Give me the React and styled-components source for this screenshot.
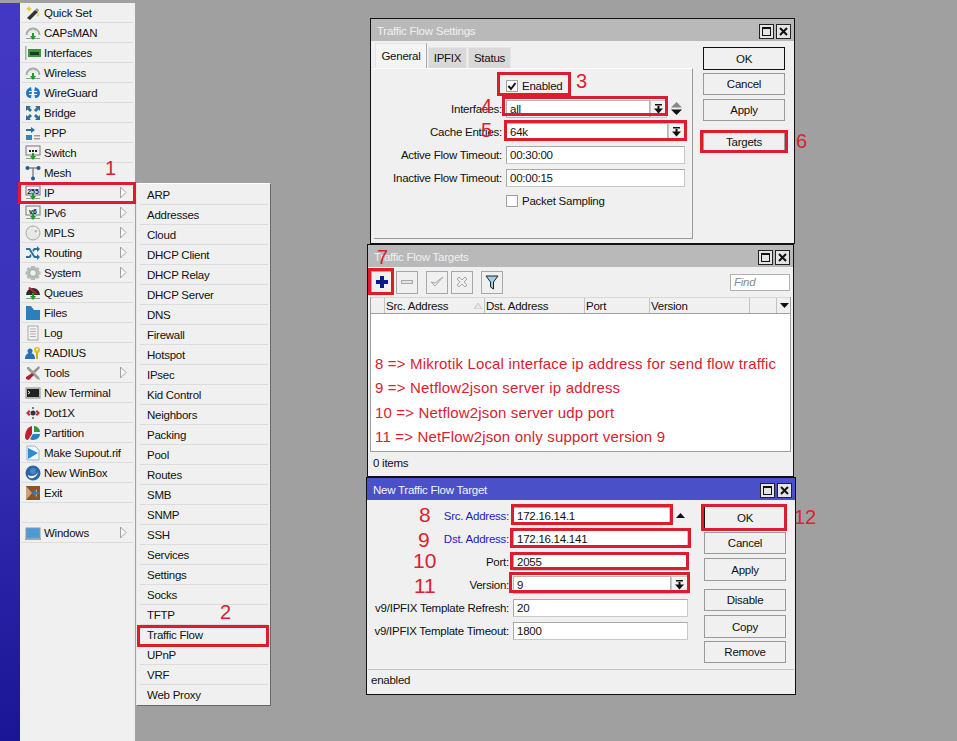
import React from "react";
import styled, { createGlobalStyle } from "styled-components";

const Global = createGlobalStyle`
  html, body { margin: 0; padding: 0; background: #a0a0a0; }
  * { box-sizing: border-box; }
`;

const Screen = styled.div`
  position: relative;
  width: 957px;
  height: 741px;
  overflow: hidden;
  display: flex;
  background: #a0a0a0;
  color: #111;
  font-family: "Liberation Sans", Arial, sans-serif;
  font-size: 11.5px;
  letter-spacing: -0.25px;
`;

const Strip = styled.div`
  width: 20px;
  margin-top: 3px;
  background: linear-gradient(180deg, #4238c4 0%, #3a32b8 50%, #1a1496 100%);
`;

const Sidebar = styled.nav`
  width: 115px;
  margin-top: 3px;
  background: #f0f0f0;
`;

const MenuRow = styled.div`
  height: 20px;
  margin: 0 2px;
  display: flex;
  align-items: center;
  border-bottom: 1px solid #dcdcdc;
  position: relative;
  svg.ico { margin-left: 3px; margin-right: 3px; flex: none; }
`;

const Chevron = styled.svg`
  position: absolute;
  right: 6px;
  top: 3px;
`;

const Desktop = styled.main`
  flex: 1;
  position: relative;
`;

const SubMenu = styled.div`
  position: absolute;
  left: 1px;
  top: 183px;
  width: 135px;
  height: 523px;
  background: #f0f0f0;
  padding: 1px 2px 0 3px;
  border-top: 1px solid #fff;
  border-left: 1px solid #e8e8e8;
  border-right: 1px solid #6a6a6a;
  border-bottom: 1px solid #6a6a6a;
`;

const SubRow = styled.div`
  height: 20px;
  padding-left: 7px;
  display: flex;
  align-items: center;
  border-bottom: 1px solid #dcdcdc;
  &:last-child { border-bottom: none; }
`;

const Win = styled.section`
  position: absolute;
  left: ${(p) => p.$x - 135}px;
  top: ${(p) => p.$y}px;
  width: ${(p) => p.$w}px;
  height: ${(p) => p.$h}px;
  border: 1px solid #111;
  background: #f0f0f0;
  display: flex;
  flex-direction: column;
`;

const TitleBar = styled.header`
  height: 22px;
  flex: none;
  display: flex;
  align-items: center;
  justify-content: space-between;
  padding: 2px 3px 0 6px;
  background: ${(p) => (p.$active ? "#4a50c8" : "#b9b9b9")};
  color: ${(p) => (p.$active ? "#f4f4ff" : "#f0f0f0")};
`;

const WinBtns = styled.div`
  display: flex;
  gap: 2px;
`;

const WinBtn = styled.div`
  width: 15px;
  height: 15px;
  border: 1px solid #222;
  background: #e4e4e4;
  display: flex;
  align-items: center;
  justify-content: center;
`;

const MaxGlyph = styled.div`
  width: 9px;
  height: 9px;
  border: 1px solid #111;
  border-top-width: 2px;
`;

const SettingsBody = styled.div`
  flex: 1;
  display: flex;
  padding: 2px 9px 4px 3px;
  gap: 10px;
`;

const TabArea = styled.div`
  width: 319px;
  display: flex;
  flex-direction: column;
`;

const Tabs = styled.div`
  display: flex;
  align-items: flex-end;
  height: 25px;
  padding-left: 1px;
  gap: 1px;
`;

const Tab = styled.div`
  height: ${(p) => (p.$on ? 25 : 21)}px;
  width: ${(p) => p.$w}px;
  display: flex;
  align-items: center;
  justify-content: center;
  background: ${(p) => (p.$on ? "#f4f4f4" : "#d9d9d9")};
  border: 1px solid #e6e6e6;
  border-bottom: none;
  border-right-color: ${(p) => (p.$on ? "#a8a8a8" : "#e6e6e6")};
`;

const TabPanel = styled.div`
  flex: 1;
  border-top: 1px solid #fff;
  border-right: 1px solid #9a9a9a;
  border-bottom: 1px solid #9a9a9a;
  padding-top: 5px;
`;

const FormRow = styled.div`
  height: 23px;
  display: flex;
  align-items: center;
  gap: 4px;
`;

const Label = styled.label`
  width: ${(p) => p.$w}px;
  flex: none;
  text-align: right;
  white-space: nowrap;
  color: ${(p) => (p.$link ? "#1c1cc0" : "inherit")};
`;

const Field = styled.div`
  width: ${(p) => p.$w}px;
  height: 18px;
  flex: none;
  display: flex;
  align-items: center;
  padding-left: 3px;
  background: #fff;
  border: 1px solid #a9a9a9;
  border-right-color: #c8c8c8;
  border-bottom-color: #c8c8c8;
`;

const Combo = styled.div`
  width: ${(p) => p.$w}px;
  height: 18px;
  flex: none;
  display: flex;
`;

const ComboText = styled.div`
  flex: 1;
  padding-left: 3px;
  display: flex;
  align-items: center;
  background: #fff;
  border: 1px solid #b4b4b4;
`;

const ComboBtn = styled.div`
  width: 17px;
  flex: none;
  display: flex;
  align-items: center;
  justify-content: center;
  background: #f2f2f2;
  border: 1px solid #c8c8c8;
`;

const CheckBox = styled.div`
  width: 12px;
  height: 12px;
  flex: none;
  background: #fff;
  border: 1px solid #a0a0a0;
  display: flex;
  align-items: center;
  justify-content: center;
`;

const CheckRow = styled(FormRow)`
  padding-left: 132px;
`;

const UpArrow = styled.svg`
  margin-left: 2px;
`;

const BtnCol = styled.div`
  flex: 1;
  display: flex;
  flex-direction: column;
  padding-top: ${(p) => p.$top || 4}px;
`;

const Btn = styled.div`
  height: ${(p) => p.$h || 22}px;
  margin-bottom: ${(p) => p.$after ?? 4}px;
  display: flex;
  align-items: center;
  justify-content: center;
  background: #f0f0f0;
  border: 1px solid ${(p) => (p.$primary ? "#111" : "#9a9a9a")};
`;

const Toolbar = styled.div`
  height: 30px;
  flex: none;
  display: flex;
  align-items: center;
  padding: 0 3px 0 2px;
`;

const ToolBtn = styled.div`
  width: 22px;
  height: 23px;
  margin-left: ${(p) => p.$ml ?? 3}px;
  display: flex;
  align-items: center;
  justify-content: center;
  background: #f0f0f0;
  border: 1px solid #a8a8a8;
`;

const FindBox = styled.div`
  width: 60px;
  height: 17px;
  margin-left: auto;
  padding-left: 3px;
  background: #fff;
  border: 1px solid #b0b0b0;
  color: #8a8a8a;
  font-style: italic;
  display: flex;
  align-items: center;
`;

const TableWrap = styled.div`
  margin: 0 2px;
  flex: 1;
  display: flex;
  flex-direction: column;
  border: 1px solid #a0a0a0;
  border-top: none;
`;

const TableHead = styled.div`
  height: 17px;
  flex: none;
  display: flex;
  background: #f0f0f0;
  border-bottom: 1px solid #a0a0a0;
  border-top: 1px solid #d8d8d8;
`;

const HeadCell = styled.div`
  width: ${(p) => p.$w}px;
  flex: none;
  padding-left: 1px;
  display: flex;
  align-items: center;
  justify-content: ${(p) => (p.$between ? "space-between" : "flex-start")};
  border-right: 1px solid #c4c4c4;
  svg { margin-right: 2px; }
`;

const HeadArrow = styled.svg`
  margin: 5px 0 0 3px;
`;

const TableBody = styled.div`
  flex: 1;
  background: #fff;
  padding: 38px 0 0 4px;
  color: #d8232f;
  font-size: 15px;
  letter-spacing: 0.17px;
`;

const NoteLine = styled.div`
  height: 24.4px;
  line-height: 24.4px;
  white-space: nowrap;
`;

const StatusBar = styled.div`
  height: ${(p) => p.$h}px;
  flex: none;
  margin: ${(p) => p.$m};
  padding-left: 3px;
  display: flex;
  align-items: center;
  border-top: 1px solid ${(p) => p.$line || "transparent"};
`;

const TargetBody = styled.div`
  flex: 1;
  display: flex;
  padding: 4px 9px 0 0;
  gap: 16px;
`;

const FormCol = styled.div`
  width: 321px;
`;

const Mark = styled.div`
  position: absolute;
  left: ${(p) => p.$x}px;
  top: ${(p) => p.$y}px;
  width: ${(p) => p.$w}px;
  height: ${(p) => p.$h}px;
  border: 3px solid #dd1c2c;
  pointer-events: none;
`;

const Num = styled.span`
  position: absolute;
  left: ${(p) => p.$x}px;
  top: ${(p) => p.$y}px;
  font-size: ${(p) => p.$s || 20}px;
  line-height: 1;
  letter-spacing: 0;
  color: #d8232f;
`;

const Base = () => (
  <>
    <rect x="1" y="13" width="14" height="1" fill="#8aa58a" />
    <path d="M5 11h6l-3 4z" fill="#1f9a2b" />
    <rect x="7" y="8" width="2" height="4" fill="#1f9a2b" />
  </>
);

const Dome = () => (
  <>
    <path d="M1.500 10a6.500 6.500 0 0 1 13 0" fill="none" stroke="#a4aaa4" strokeWidth="2" />
    <path d="M5 8a3 3 0 0 1 6 0" fill="none" stroke="#d4d8d4" strokeWidth="1" />
    <Base />
  </>
);

const Monitor = ({ children }) => (
  <>
    <rect x="1" y="1" width="14" height="9" fill="#f2f2f2" stroke="#777" />
    {children}
    <Base />
  </>
);

const icons = {
  quick: (
    <>
      <path d="M2 13L10 5l3 2-8 8z" fill="#333" />
      <path d="M10 5l3 2 1-2-2-2z" fill="#999" />
      <path d="M4 1l1 2 2 1-2 1-1 2-1-2-2-1 2-1zM13 8l.6 1.400L15 10l-1.400.6L13 12l-.6-1.400L11 10l1.400-.6z" fill="#e6c81e" />
    </>
  ),
  wireless: <Dome />,
  interfaces: (
    <>
      <rect x="0" y="1" width="1.500" height="14" fill="#a3b5a3" />
      <rect x="3" y="4" width="13" height="8" fill="#35993a" />
      <rect x="5" y="7" width="9" height="3" fill="#163f18" />
    </>
  ),
  wireguard: (
    <>
      <path d="M1 8c0-3 2-5 5-6L7 7 6 13C3 13 1 11 1 8zM15 8c0-3-2-5-5-6L9 7l1 6c3 0 5-2 5-5z" fill="#1c79cf" />
      <path d="M4 6h8v1H4zM4 9h8v1H4z" fill="#fff" />
    </>
  ),
  bridge: (
    <path d="M1 1h5L4.500 2.500 7 5 5 7 2.500 4.500 1 6zM15 1v5l-1.500-1.500L11 7 9 5l2.500-2.500L10 1zM1 15v-5l1.500 1.500L5 9l2 2-2.500 2.500L6 15zM15 15h-5l1.500-1.500L9 11l2-2 2.500 2.500L15 10z" fill="#2a6f9e" />
  ),
  ppp: (
    <>
      <path d="M1 4h5V2l4 3-4 3V6H1z" fill="#2a6f9e" />
      <rect x="1" y="10" width="6" height="5" fill="#2f86c4" />
      <path d="M9 10h6v1.500H9zM9 13h6v1.500H9z" fill="#9a9a9a" />
    </>
  ),
  sw: (
    <Monitor>
      <path d="M4 5h2v2H4zM7 5h2v2H7zM10 5h2v2h-2z" fill="#222" />
    </Monitor>
  ),
  mesh: (
    <>
      <path d="M3 3h10M8 3v10" stroke="#888" strokeWidth="1.500" />
      <circle cx="2.500" cy="3" r="2" fill="#1d5f93" />
      <circle cx="13.500" cy="3" r="2" fill="#1d5f93" />
      <circle cx="8" cy="13.500" r="2" fill="#1d5f93" />
    </>
  ),
  ip: (
    <Monitor>
      <text x="8" y="8.500" textAnchor="middle" fontSize="7" fontWeight="700" fontFamily="Liberation Sans" letterSpacing="0" fill="#111">255</text>
    </Monitor>
  ),
  ipv6: (
    <Monitor>
      <text x="8" y="8.500" textAnchor="middle" fontSize="7" fontWeight="700" fontFamily="Liberation Sans" letterSpacing="0" fill="#111">v6</text>
    </Monitor>
  ),
  mpls: (
    <>
      <circle cx="8" cy="8" r="7" fill="#e6e9e6" stroke="#a5aaa5" />
      <path d="M9 2a6 6 0 0 1 4 7c-2-1-3-4-4-7z" fill="#fff" />
      <circle cx="11" cy="6" r="1.500" fill="#b8bdb8" />
    </>
  ),
  routing: (
    <path d="M1 3h4l5 8h2V9l3 3-3 3v-2H9L4 5H1zM1 11h3l1.500-2 1.200 2L5 13H1zM9 3h3V1l3 3-3 3V5h-2L8.500 7 7.300 5z" fill="#2a6f9e" />
  ),
  system: (
    <>
      <path d="M6 1h4l.5 2 2-1 2 2-1 2 2 .5v3l-2 .5 1 2-2 2-2-1-.5 2H6l-.5-2-2 1-2-2 1-2-2-.5v-3l2-.5-1-2 2-2 2 1z" fill="#b6bcb6" />
      <circle cx="8" cy="8" r="3.500" fill="#eee" stroke="#9ca29c" />
    </>
  ),
  queues: (
    <>
      <path d="M1 10a7 7 0 0 1 14 0z" fill="#2b2b2b" />
      <path d="M3 3l2-1 8 7h-3z" fill="#c01f2c" />
      <Base />
    </>
  ),
  files: <path d="M1 1h5l3 4h6v10H1z" fill="#2a7fbd" />,
  log: (
    <>
      <rect x="3" y="1" width="10" height="14" fill="#f2f2f2" stroke="#a8a8a8" />
      <path d="M5 4h6M5 6.500h6M5 9h6M5 11.500h6" stroke="#b0b0b0" />
    </>
  ),
  radius: (
    <>
      <circle cx="5" cy="6" r="2.500" fill="#2a6fb8" />
      <path d="M0 14c0-4 2-6 5-6s5 2 5 6z" fill="#2a6fb8" />
      <circle cx="12" cy="5" r="3" fill="#e4c020" />
      <circle cx="12" cy="4.500" r="1" fill="#fff" />
      <rect x="11" y="7" width="2" height="7" fill="#d4b010" />
    </>
  ),
  tools: (
    <>
      <path d="M2 2l2 0 10 10 1 3-3-1L2 4z" fill="#9a9e9a" />
      <path d="M14 1l1 2-5 5-2-2z" fill="#8f9390" />
      <path d="M7 8l2 2-5 5-3-1 0-2z" fill="#b3202c" />
    </>
  ),
  terminal: (
    <>
      <rect x="1" y="3" width="14" height="10" fill="#d9d9d9" stroke="#8a8a8a" />
      <rect x="2" y="4" width="12" height="8" fill="#222" />
      <path d="M3 6l2 1.500L3 9" stroke="#eee" fill="none" />
    </>
  ),
  dot1x: (
    <>
      <path d="M1 8l3-3 1.500 1.500L4 8l1.500 1.500L4 11zM15 8l-3-3-1.500 1.500L12 8l-1.500 1.500L12 11z" fill="#b53040" />
      <circle cx="8" cy="8" r="2.500" fill="#3a3038" />
      <path d="M8 2v2M8 12v2" stroke="#555" strokeWidth="1.500" />
    </>
  ),
  partition: (
    <>
      <path d="M7 1C3 2 0 6 0 12c0 2 1 3 3 3l4-6z" fill="#c0202c" />
      <path d="M9 1c3 0 6 3 6 6H9z" fill="#2a9a3a" />
      <path d="M8 9h7c0 3-3 6-7 6-1.500 0-2.500-.5-3-1z" fill="#2a7fc0" />
    </>
  ),
  supout: (
    <>
      <path d="M2 1h8l4 4v10H2z" fill="#f4f8fc" stroke="#9fb4c8" />
      <path d="M3 3l10 5-10 6z" fill="#2f8ad0" />
    </>
  ),
  winbox: (
    <>
      <circle cx="8" cy="8" r="7.500" fill="#2d66a8" />
      <path d="M3 10c3 2 8 1 10-3-1 5-5 7-8 6-1-.5-2-1.500-2-3z" fill="#eef4fb" />
      <circle cx="8" cy="6" r="3" fill="#4c86c4" />
    </>
  ),
  exit: (
    <>
      <rect x="1" y="1" width="14" height="14" fill="#8c5426" />
      <path d="M1 1l6 7-6 7zM8 8l4-4v3h3v2h-3v3z" fill="#cfa070" />
      <path d="M7 8l4-4v3h4v2h-4v3z" fill="#2a7fc0" />
    </>
  ),
  windows: (
    <>
      <rect x="1" y="3" width="14" height="10" fill="#4a9ad8" stroke="#8a9aa8" />
      <rect x="0" y="13" width="16" height="2" fill="#9aa4ac" />
    </>
  ),
};

const sideItems = [
  ["Quick Set", "quick"],
  ["CAPsMAN", "wireless"],
  ["Interfaces", "interfaces"],
  ["Wireless", "wireless"],
  ["WireGuard", "wireguard"],
  ["Bridge", "bridge"],
  ["PPP", "ppp"],
  ["Switch", "sw"],
  ["Mesh", "mesh"],
  ["IP", "ip", true],
  ["IPv6", "ipv6", true],
  ["MPLS", "mpls", true],
  ["Routing", "routing", true],
  ["System", "system", true],
  ["Queues", "queues"],
  ["Files", "files"],
  ["Log", "log"],
  ["RADIUS", "radius"],
  ["Tools", "tools", true],
  ["New Terminal", "terminal"],
  ["Dot1X", "dot1x"],
  ["Partition", "partition"],
  ["Make Supout.rif", "supout"],
  ["New WinBox", "winbox"],
  ["Exit", "exit"],
  [""],
  ["Windows", "windows", true],
];

const subItems = [
  "ARP", "Addresses", "Cloud", "DHCP Client", "DHCP Relay", "DHCP Server", "DNS",
  "Firewall", "Hotspot", "IPsec", "Kid Control", "Neighbors", "Packing", "Pool",
  "Routes", "SMB", "SNMP", "SSH", "Services", "Settings", "Socks", "TFTP",
  "Traffic Flow", "UPnP", "VRF", "Web Proxy",
];

const marks = [
  [18, 182, 118, 22], [137, 625, 132, 22], [497, 72, 74, 24], [502, 96, 166, 20],
  [504, 120, 183, 21], [700, 130, 88, 23], [368, 268, 26, 27], [511, 504, 162, 21],
  [510, 528, 181, 20], [510, 552, 179, 18], [509, 572, 181, 21], [701, 504, 86, 27],
];

const nums = [
  ["1", 105, 158], ["2", 220, 602], ["3", 576, 71], ["4", 481, 96], ["5", 481, 120],
  ["6", 796, 131], ["7", 377, 247], ["8", 419, 504, 21], ["9", 418, 529, 21],
  ["10", 413, 550, 21], ["11", 414, 575, 21], ["12", 794, 507, 20],
];

const DropIcon = () => (
  <svg width="9" height="10" viewBox="0 0 9 10">
    <rect x="1" y="0" width="7" height="1.500" fill="#111" />
    <rect x="3.500" y="2" width="2" height="3" fill="#111" />
    <path d="M0 4.500h9L4.500 9.500z" fill="#111" />
  </svg>
);

const Controls = () => (
  <WinBtns>
    <WinBtn><MaxGlyph /></WinBtn>
    <WinBtn>
      <svg width="9" height="9" viewBox="0 0 9 9">
        <path d="M1 1l7 7M8 1L1 8" stroke="#111" strokeWidth="2" />
      </svg>
    </WinBtn>
  </WinBtns>
);

const SettingsWindow = () => (
  <Win $x={370} $y={18} $w={425} $h={226}>
    <TitleBar>
      <span>Traffic Flow Settings</span>
      <Controls />
    </TitleBar>
    <SettingsBody>
      <TabArea>
        <Tabs>
          <Tab $on $w={52}>General</Tab>
          <Tab $w={39}>IPFIX</Tab>
          <Tab $w={43}>Status</Tab>
        </Tabs>
        <TabPanel>
          <CheckRow>
            <CheckBox>
              <svg width="10" height="10" viewBox="0 0 10 10">
                <path d="M1.500 5l2.500 3 4.500-6" fill="none" stroke="#111" strokeWidth="2" />
              </svg>
            </CheckBox>
            Enabled
          </CheckRow>
          <FormRow>
            <Label $w={128}>Interfaces:</Label>
            <Combo $w={161}>
              <ComboText>all</ComboText>
              <ComboBtn><DropIcon /></ComboBtn>
            </Combo>
            <svg width="11" height="13" viewBox="0 0 11 13">
              <path d="M5.500 0L11 5.500H0z" fill="#888" />
              <path d="M5.500 13L11 7.500H0z" fill="#111" />
            </svg>
          </FormRow>
          <FormRow>
            <Label $w={128}>Cache Entries:</Label>
            <Combo $w={179}>
              <ComboText>64k</ComboText>
              <ComboBtn><DropIcon /></ComboBtn>
            </Combo>
          </FormRow>
          <FormRow>
            <Label $w={128}>Active Flow Timeout:</Label>
            <Field $w={179}>00:30:00</Field>
          </FormRow>
          <FormRow>
            <Label $w={128}>Inactive Flow Timeout:</Label>
            <Field $w={179}>00:00:15</Field>
          </FormRow>
          <CheckRow>
            <CheckBox />
            Packet Sampling
          </CheckRow>
        </TabPanel>
      </TabArea>
      <BtnCol>
        <Btn $primary $h={23} $after={3}>OK</Btn>
        <Btn>Cancel</Btn>
        <Btn $after={10}>Apply</Btn>
        <Btn>Targets</Btn>
      </BtnCol>
    </SettingsBody>
  </Win>
);

const TargetsWindow = () => (
  <Win $x={367} $y={244} $w={427} $h={233}>
    <TitleBar>
      <span>Traffic Flow Targets</span>
      <Controls />
    </TitleBar>
    <Toolbar>
      <ToolBtn $ml={1}>
        <svg width="14" height="14" viewBox="0 0 14 14">
          <path d="M5 1h4v4h4v4H9v4H5V9H1V5h4z" fill="#0c1a8c" />
        </svg>
      </ToolBtn>
      <ToolBtn>
        <svg width="12" height="4" viewBox="0 0 12 4">
          <rect x="0.500" y="0.500" width="11" height="3" fill="#e4e4e4" stroke="#a8a8a8" />
        </svg>
      </ToolBtn>
      <ToolBtn $ml={8}>
        <svg width="14" height="12" viewBox="0 0 14 12">
          <path d="M1 6l4 4 8-9-8 6z" fill="#eee" stroke="#a8a8a8" />
        </svg>
      </ToolBtn>
      <ToolBtn>
        <svg width="12" height="12" viewBox="0 0 12 12">
          <path d="M1 3l2-2 3 3 3-3 2 2-3 3 3 3-2 2-3-3-3 3-2-2 3-3z" fill="#eee" stroke="#a8a8a8" />
        </svg>
      </ToolBtn>
      <ToolBtn $ml={8}>
        <svg width="14" height="15" viewBox="0 0 14 15">
          <path d="M1 1h12L8.500 7v7l-3-2V7z" fill="#9cd0e8" stroke="#222" />
        </svg>
      </ToolBtn>
      <FindBox>Find</FindBox>
    </Toolbar>
    <TableWrap>
      <TableHead>
        <HeadCell $w={14} />
        <HeadCell $w={100} $between>
          Src. Address
          <svg width="8" height="6" viewBox="0 0 8 6">
            <path d="M4 0l4 6H0z" fill="#e8e8e8" stroke="#c8c8c8" />
          </svg>
        </HeadCell>
        <HeadCell $w={100}>Dst. Address</HeadCell>
        <HeadCell $w={65}>Port</HeadCell>
        <HeadCell $w={100}>Version</HeadCell>
        <HeadCell $w={27} />
        <HeadArrow width="9" height="5" viewBox="0 0 9 5">
          <path d="M0 0h9L4.500 5z" fill="#111" />
        </HeadArrow>
      </TableHead>
      <TableBody>
        <NoteLine>8 =&gt; Mikrotik Local interface ip address for send flow traffic</NoteLine>
        <NoteLine>9 =&gt; Netflow2json server ip address</NoteLine>
        <NoteLine>10 =&gt; Netflow2json server udp port</NoteLine>
        <NoteLine>11 =&gt; NetFlow2json only support version 9</NoteLine>
      </TableBody>
    </TableWrap>
    <StatusBar $h={21} $m="0 2px 3px">0 items</StatusBar>
  </Win>
);

const NewTargetWindow = () => (
  <Win $x={366} $y={477} $w={430} $h={218}>
    <TitleBar $active>
      <span>New Traffic Flow Target</span>
      <Controls />
    </TitleBar>
    <TargetBody>
      <FormCol>
        <FormRow>
          <Label $w={142} $link>Src. Address:</Label>
          <Field $w={157}>172.16.14.1</Field>
          <UpArrow width="9" height="5" viewBox="0 0 9 5">
            <path d="M4.500 0L9 5H0z" fill="#111" />
          </UpArrow>
        </FormRow>
        <FormRow>
          <Label $w={142} $link>Dst. Address:</Label>
          <Field $w={175}>172.16.14.141</Field>
        </FormRow>
        <FormRow>
          <Label $w={142}>Port:</Label>
          <Field $w={175}>2055</Field>
        </FormRow>
        <FormRow>
          <Label $w={142}>Version:</Label>
          <Combo $w={175}>
            <ComboText>9</ComboText>
            <ComboBtn><DropIcon /></ComboBtn>
          </Combo>
        </FormRow>
        <FormRow>
          <Label $w={142}>v9/IPFIX Template Refresh:</Label>
          <Field $w={175}>20</Field>
        </FormRow>
        <FormRow>
          <Label $w={142}>v9/IPFIX Template Timeout:</Label>
          <Field $w={175}>1800</Field>
        </FormRow>
      </FormCol>
      <BtnCol $top={2}>
        <Btn $primary $h={23} $after={3}>OK</Btn>
        <Btn>Cancel</Btn>
        <Btn $h={23} $after={8}>Apply</Btn>
        <Btn>Disable</Btn>
        <Btn $h={23} $after={3}>Copy</Btn>
        <Btn>Remove</Btn>
      </BtnCol>
    </TargetBody>
    <StatusBar $h={21} $m="0 1px 4px" $line="#c4c4c4">enabled</StatusBar>
  </Win>
);

export default function App() {
  return (
    <Screen>
      <Global />
      <Strip />
      <Sidebar>
        {sideItems.map(([label, icon, more], i) => (
          <MenuRow key={i}>
            {icon && (
              <svg className="ico" width="16" height="16" viewBox="0 0 16 16">
                {icons[icon]}
              </svg>
            )}
            {label}
            {more && (
              <Chevron width="7" height="13" viewBox="0 0 7 13">
                <path d="M.5 1l5.500 5.500L.5 12z" fill="#f8f8f8" stroke="#a0a0a0" />
              </Chevron>
            )}
          </MenuRow>
        ))}
      </Sidebar>
      <Desktop>
        <SubMenu>
          {subItems.map((s) => (
            <SubRow key={s}>{s}</SubRow>
          ))}
        </SubMenu>
        <SettingsWindow />
        <TargetsWindow />
        <NewTargetWindow />
      </Desktop>
      {marks.map(([x, y, w, h], i) => (
        <Mark key={i} $x={x} $y={y} $w={w} $h={h} />
      ))}
      {nums.map(([t, x, y, s]) => (
        <Num key={t} $x={x} $y={y} $s={s}>{t}</Num>
      ))}
    </Screen>
  );
}
